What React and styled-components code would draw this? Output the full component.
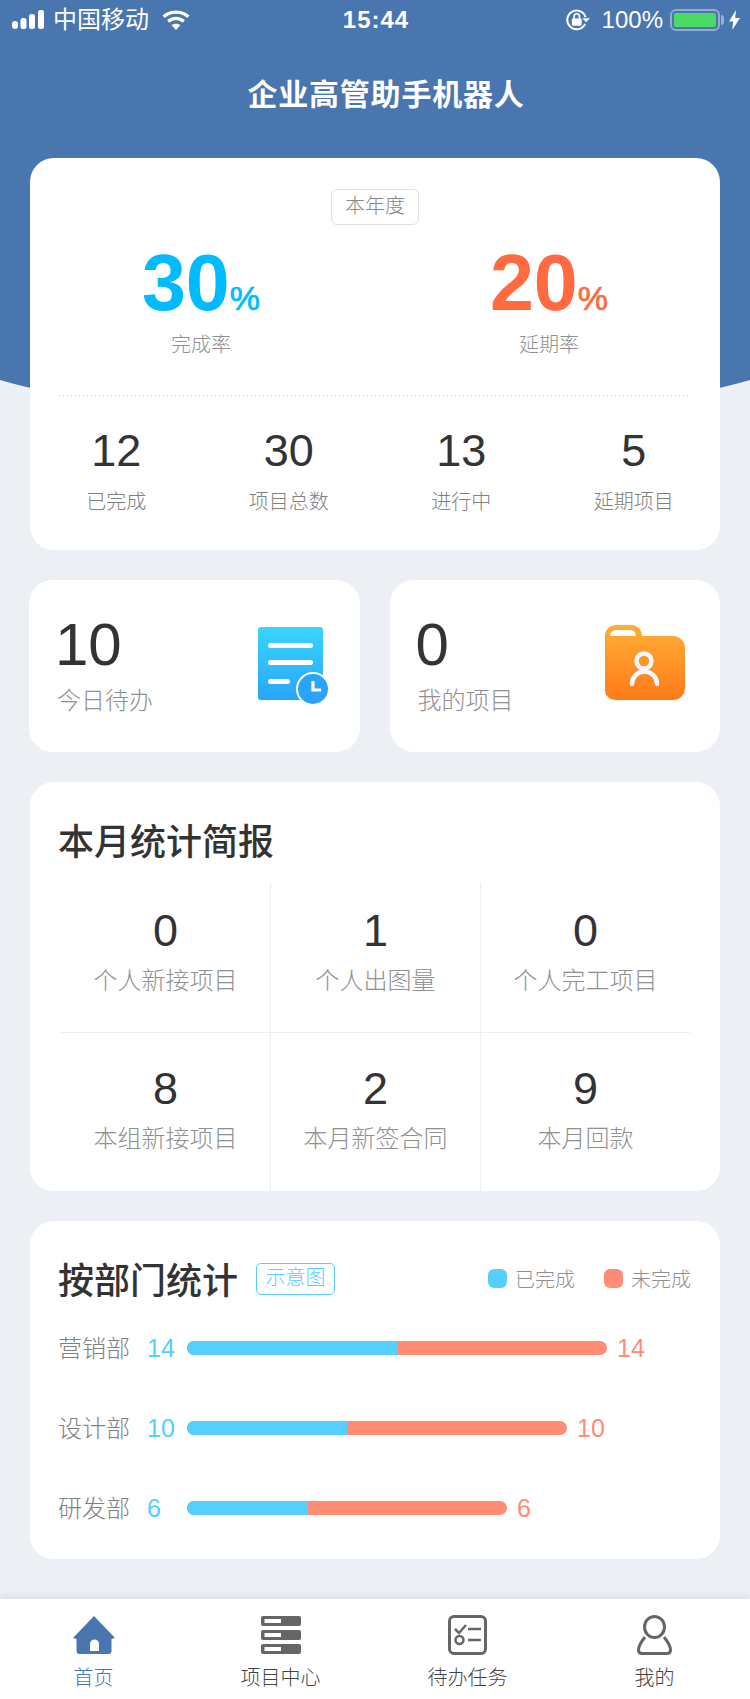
import React from 'react'
import styled, { createGlobalStyle } from 'styled-components'

const BLUE = '#4a76b0'
const SKY = '#55cfff'
const CORAL = '#ff8c74'

const GlobalStyle = createGlobalStyle`
    html, body {
        margin: 0;
        padding: 0;
        background: #ecf0f5;
    }
    * {
        box-sizing: border-box;
    }
    body {
        font-family: "Liberation Sans", "Noto Sans CJK SC", sans-serif;
    }
`

const Page = styled.div`
    width: 750px;
    min-height: 1699px;
    display: flex;
    flex-direction: column;
    overflow: hidden;
    background: #ecf0f5;
`

const Hero = styled.header`
    position: relative;
    height: 158px;
    color: #fff;

    /* wide ellipse so only the shallow part of the curve shows */
    &::before {
        content: "";
        position: absolute;
        top: 0;
        left: -125px;
        width: 1000px;
        height: 423px;
        background: ${BLUE};
        border-radius: 0 0 50% 50% / 0 0 127px 127px;
    }
`

const StatusBar = styled.div`
    position: relative;
    height: 40px;
    display: grid;
    grid-template-columns: 1fr auto 1fr;
    align-items: center;
    padding: 0 10px 0 12px;
    font-size: 24px;
`

const StatusLeft = styled.div`
    display: flex;
    align-items: center;
`

const StatusRight = styled.div`
    display: flex;
    align-items: center;
    justify-content: flex-end;
`

const Carrier = styled.span`
    margin: 0 13px 0 9px;
    font-size: 24px;
    line-height: 40px;
`

const Clock = styled.span`
    font-weight: 700;
    font-size: 24px;
    letter-spacing: 1px;
`

const Percent = styled.span`
    margin: 0 7px 0 11px;
    font-size: 24px;
`

const Battery = styled.div`
    position: relative;
    width: 50px;
    height: 22px;
    padding: 2px;
    border: 2px solid rgba(255, 255, 255, 0.4);
    border-radius: 6px;
    margin-right: 9px;

    &::before {
        content: "";
        display: block;
        height: 100%;
        border-radius: 2px;
        background: #4cd964;
    }

    &::after {
        content: "";
        position: absolute;
        right: -6px;
        top: 4px;
        width: 3px;
        height: 10px;
        border-radius: 0 3px 3px 0;
        background: rgba(255, 255, 255, 0.45);
    }
`

const Title = styled.h1`
    position: relative;
    margin: 31px 0 0;
    padding-left: 22px;
    text-align: center;
    font-size: 30px;
    line-height: 48px;
    font-weight: 700;
    letter-spacing: 0.8px;
`

const Content = styled.main`
    position: relative;
    flex: 1;
    display: flex;
    flex-direction: column;
    gap: 30px;
    padding: 0 30px;
`

const Card = styled.section`
    background: #fff;
    border-radius: 24px;
`

const SummaryCard = styled(Card)`
    padding: 31px 0 34px;
    display: flex;
    flex-direction: column;
    align-items: center;
`

const YearTag = styled.div`
    width: 88px;
    height: 36px;
    border: 1.5px solid #e0e0e0;
    border-radius: 6px;
    text-align: center;
    font-size: 20px;
    line-height: 32px;
    font-weight: 300;
    color: #888;
`

const RateRow = styled.div`
    width: 696px;
    margin-top: 19px;
    display: grid;
    grid-template-columns: 1fr 1fr;
`

const Rate = styled.div`
    display: flex;
    flex-direction: column;
    align-items: center;
    color: ${(p) => p.$color};
`

const RateValue = styled.div`
    font-size: 79px;
    line-height: 78px;
    font-weight: 700;
`

const RateUnit = styled.span`
    font-size: 34px;
    line-height: 1;
    font-weight: 400;
    -webkit-text-stroke: 0.7px currentColor;
`

const RateLabel = styled.div`
    margin-top: 9px;
    font-size: 20px;
    line-height: 28px;
    font-weight: 300;
    color: #909090;
`

const DottedRule = styled.div`
    width: 632px;
    height: 1px;
    margin-top: 36px;
    background: linear-gradient(to right, #c4c4c4 1px, transparent 1px) 0 0 / 4px 1px repeat-x;
`

const CountRow = styled.div`
    width: 100%;
    margin-top: 30px;
    display: grid;
    grid-template-columns: repeat(4, 1fr);
    text-align: center;
`

const CountValue = styled.div`
    font-size: 45px;
    line-height: 50px;
    color: #333;
`

const CountLabel = styled.div`
    margin-top: 12px;
    font-size: 20px;
    line-height: 28px;
    font-weight: 300;
    color: #808080;
`

const ShortcutRow = styled.div`
    margin-left: -1px;
    display: grid;
    grid-template-columns: 1fr 1fr;
    gap: 30px;
`

const Shortcut = styled(Card)`
    height: 172px;
    padding: 35px ${(p) => p.$right}px 0 28px;
    display: flex;
    justify-content: space-between;
    align-items: flex-start;
`

const ShortcutValue = styled.div`
    margin-left: -2px;
    font-size: 60px;
    line-height: 60px;
    color: #333;
`

const ShortcutLabel = styled.div`
    margin-top: 10px;
    font-size: 24px;
    line-height: 32px;
    font-weight: 300;
    color: #909090;
`

const ShortcutIcon = styled.svg`
    margin-top: ${(p) => p.$top}px;
    flex: none;
`

const SectionTitle = styled.h2`
    margin: 0;
    padding-top: 4px;
    font-size: 36px;
    line-height: 50px;
    font-weight: 500;
    color: #333;
`

const ReportCard = styled(Card)`
    padding: 32px 30px 0 28px;
`

const ReportGrid = styled.div`
    margin: 14px 0 0 3px;
    display: grid;
    grid-template-columns: 210px 210px 1fr;
    grid-template-rows: 151px 158px;
    text-align: center;
`

const ReportCell = styled.div`
    padding-top: 24px;
    border-right: 1px solid #eee;

    &:nth-child(3n) {
        border-right: 0;
    }

    &:nth-child(-n + 3) {
        border-bottom: 1px solid #eee;
    }

    &:nth-child(n + 4) {
        padding-top: 31px;
    }
`

const ReportValue = styled.div`
    font-size: 45px;
    line-height: 50px;
    color: #333;
`

const ReportLabel = styled.div`
    margin-top: 8px;
    font-size: 24px;
    line-height: 34px;
    font-weight: 300;
    color: #909090;
`

const DepartmentCard = styled(Card)`
    padding: 32px 30px 31px 28px;
`

const DepartmentHead = styled.div`
    display: flex;
    align-items: center;
`

const SketchTag = styled.span`
    width: 79px;
    height: 32px;
    margin: 0 0 2px 18px;
    border: 1px solid ${SKY};
    border-radius: 5px;
    text-align: center;
    font-size: 20px;
    line-height: 29px;
    font-weight: 300;
    color: ${SKY};
`

const Legend = styled.div`
    margin: 0 -1px 4px auto;
    display: flex;
    align-items: center;
    font-size: 20px;
    font-weight: 300;
    color: #909090;
`

const LegendDot = styled.i`
    width: 19px;
    height: 19px;
    margin: 0 8px 0 ${(p) => p.$gap}px;
    border-radius: 6px;
    background: ${(p) => p.$color};
`

const BarList = styled.div`
    margin-top: 21px;
    display: flex;
    flex-direction: column;
    gap: 40px;
`

const BarRow = styled.div`
    height: 40px;
    display: flex;
    align-items: center;
`

const BarName = styled.span`
    width: 89px;
    margin-bottom: 3px;
    font-size: 24px;
    font-weight: 300;
    color: #808080;
`

const BarCount = styled.span`
    width: 40px;
    font-size: 25px;
    color: ${SKY};
`

const Bar = styled.div`
    height: 14px;
    display: flex;
    overflow: hidden;
    border-radius: 7px;
    background: ${CORAL};
`

const BarDone = styled.div`
    height: 100%;
    background: ${SKY};
`

const BarRest = styled.span`
    margin-left: 10px;
    font-size: 25px;
    color: ${CORAL};
`

const TabBar = styled.nav`
    position: relative;
    height: 100px;
    padding-right: 2px;
    display: grid;
    grid-template-columns: repeat(4, 1fr);
    background: #fff;
    box-shadow: 0 -2px 8px rgba(120, 140, 180, 0.2);
`

const Tab = styled.div`
    padding-top: 16px;
    display: flex;
    flex-direction: column;
    align-items: center;
    color: ${(p) => (p.$active ? BLUE : '#444')};
`

const TabIconBox = styled.div`
    height: 40px;
    display: flex;
    align-items: center;
`

const TabLabel = styled.span`
    margin-top: 11px;
    font-size: 20px;
    line-height: 24px;
    font-weight: 300;
`

const SignalIcon = () => (
    <svg width="32" height="20" viewBox="0 0 32 20" fill="#fff">
        <rect x="0" y="11" width="6" height="8" rx="3" />
        <rect x="8.5" y="8" width="6" height="11" rx="2.5" />
        <rect x="17" y="4" width="6" height="15" rx="2.5" />
        <rect x="26" y="0" width="6" height="19" rx="2.5" />
    </svg>
)

const WifiIcon = () => (
    <svg width="28" height="20" viewBox="0 0 28 20" fill="none" stroke="#fff" strokeWidth="3.4">
        <path d="M1.6 6.8C8.6 .6 19.4 .6 26.4 6.8" />
        <path d="M6.2 11.4C10.8 7.4 17.2 7.4 21.8 11.4" />
        <path d="M14 20L9.6 15.2C12 13.2 16 13.2 18.4 15.2Z" fill="#fff" stroke="none" />
    </svg>
)

const RotationLockIcon = () => (
    <svg width="25" height="22" viewBox="0 0 23 20" fill="none">
        <path d="M17.6 13.5A8.6 8.6 0 1 1 18 7.5" stroke="#fff" strokeWidth="1.8" />
        <path d="M15 8.4h7l-3.5 3.6Z" fill="#fff" />
        <rect x="5.4" y="8.6" width="9" height="6.6" rx="1" fill="#fff" />
        <path d="M7.4 9V6.8a2.5 2.5 0 0 1 5 0V9" stroke="#fff" strokeWidth="1.5" />
    </svg>
)

const BoltIcon = () => (
    <svg width="11" height="20" viewBox="0 0 11 20" fill="#fff">
        <path d="M7 0L0 11.5h4.2L3.2 20 11 8H6.2Z" />
    </svg>
)

const TodoIcon = () => (
    <ShortcutIcon $top={12} width="72" height="79" viewBox="0 0 72 79">
        <defs>
            <linearGradient id="todoFill" x1="0" y1="0" x2="0" y2="1">
                <stop offset="0" stopColor="#38d6fb" />
                <stop offset="1" stopColor="#2aa4fb" />
            </linearGradient>
        </defs>
        <rect x="0" y="0" width="65" height="73" rx="3" fill="url(#todoFill)" />
        <rect x="10" y="16" width="45" height="5" rx="2.5" fill="#fff" />
        <rect x="10" y="33" width="45" height="5" rx="2.5" fill="#fff" />
        <rect x="10" y="52" width="22" height="5" rx="2.5" fill="#fff" />
        <circle cx="55" cy="62" r="17" fill="#fff" />
        <circle cx="55" cy="62" r="15" fill="#2aa4fb" />
        <path d="M55 54v9h8" fill="none" stroke="#fff" strokeWidth="3.2" />
    </ShortcutIcon>
)

const ProjectIcon = () => (
    <ShortcutIcon $top={10} width="80" height="75" viewBox="0 0 80 75">
        <defs>
            <linearGradient id="folderFill" x1="0" y1="0" x2="0" y2="1">
                <stop offset="0" stopColor="#ffae35" />
                <stop offset="1" stopColor="#ff7a1a" />
            </linearGradient>
        </defs>
        <path
            d="M0 11A11 11 0 0 1 11 0H26A11 11 0 0 1 37 11H68A12 12 0 0 1 80 23V63A12 12 0 0 1 68 75H10A10 10 0 0 1 0 65Z"
            fill="url(#folderFill)"
        />
        <path d="M5 11A6 6 0 0 1 11 5H25A6 6 0 0 1 31 11Z" fill="#fff" />
        <circle cx="39" cy="36" r="7.5" fill="none" stroke="#f2f8fd" strokeWidth="4.5" />
        <path d="M27 59A12.500 12.500 0 0 1 52 59" fill="none" stroke="#f2f8fd" strokeWidth="4.5" strokeLinecap="round" />
    </ShortcutIcon>
)

const HomeIcon = () => (
    <svg width="42" height="38" viewBox="0 0 42 38" fill={BLUE}>
        <path d="M21 0L42 22 38.500 23V35A3 3 0 0 1 35.500 38H6.500A3 3 0 0 1 3.500 35V23L0 22Z" />
        <path d="M17 35V28A4.500 4.500 0 0 1 26 28V35Z" fill="#fff" />
    </svg>
)

const ServerIcon = () => (
    <svg width="40" height="38" viewBox="0 0 40 38">
        {[0, 14, 28].map((y) => (
            <g key={y}>
                <rect x="0" y={y} width="40" height="10" rx="2" fill="#666" />
                <rect x="3.500" y={y + 3} width="16.500" height="4" fill="#fff" />
            </g>
        ))}
    </svg>
)

const TaskIcon = () => (
    <svg width="39" height="40" viewBox="0 0 39 40" fill="none" stroke="#666" strokeWidth="3">
        <rect x="1.500" y="1.500" width="36" height="37" rx="4.500" />
        <path d="M7 14l4 4 7-8" strokeWidth="2.500" />
        <path d="M20 14h13M20 25h13" strokeWidth="2.500" />
        <circle cx="11.500" cy="25" r="4" strokeWidth="2.500" />
    </svg>
)

const MineIcon = () => (
    <svg width="35" height="40" viewBox="0 0 35 40" fill="none" stroke="#666" strokeWidth="3">
        <ellipse cx="17.500" cy="12" rx="10" ry="10.500" />
        <path d="M8 22C4 27 1.500 31 1.500 35Q1.500 38.500 5 38.500H30Q33.500 38.500 33.500 35C33.500 31 31 27 27 22" />
    </svg>
)

const counts = [
    { value: 12, label: '已完成' },
    { value: 30, label: '项目总数' },
    { value: 13, label: '进行中' },
    { value: 5, label: '延期项目' },
]

const report = [
    { value: 0, label: '个人新接项目' },
    { value: 1, label: '个人出图量' },
    { value: 0, label: '个人完工项目' },
    { value: 8, label: '本组新接项目' },
    { value: 2, label: '本月新签合同' },
    { value: 9, label: '本月回款' },
]

const departments = [
    { name: '营销部', done: 14, rest: 14, width: 420, doneWidth: 210 },
    { name: '设计部', done: 10, rest: 10, width: 380, doneWidth: 160 },
    { name: '研发部', done: 6, rest: 6, width: 320, doneWidth: 121 },
]

const tabs = [
    { label: '首页', icon: <HomeIcon />, active: true },
    { label: '项目中心', icon: <ServerIcon /> },
    { label: '待办任务', icon: <TaskIcon /> },
    { label: '我的', icon: <MineIcon /> },
]

const App = () => {
    return (
        <Page>
            <GlobalStyle />
            <Hero>
                <StatusBar>
                    <StatusLeft>
                        <SignalIcon />
                        <Carrier>中国移动</Carrier>
                        <WifiIcon />
                    </StatusLeft>
                    <Clock>15:44</Clock>
                    <StatusRight>
                        <RotationLockIcon />
                        <Percent>100%</Percent>
                        <Battery />
                        <BoltIcon />
                    </StatusRight>
                </StatusBar>
                <Title>企业高管助手机器人</Title>
            </Hero>
            <Content>
                <SummaryCard>
                    <YearTag>本年度</YearTag>
                    <RateRow>
                        <Rate $color="#00bbff">
                            <RateValue>30<RateUnit>%</RateUnit></RateValue>
                            <RateLabel>完成率</RateLabel>
                        </Rate>
                        <Rate $color="#ff6a41">
                            <RateValue>20<RateUnit>%</RateUnit></RateValue>
                            <RateLabel>延期率</RateLabel>
                        </Rate>
                    </RateRow>
                    <DottedRule />
                    <CountRow>
                        {counts.map((item) => (
                            <div key={item.label}>
                                <CountValue>{item.value}</CountValue>
                                <CountLabel>{item.label}</CountLabel>
                            </div>
                        ))}
                    </CountRow>
                </SummaryCard>

                <ShortcutRow>
                    <Shortcut $right={30}>
                        <div>
                            <ShortcutValue>10</ShortcutValue>
                            <ShortcutLabel>今日待办</ShortcutLabel>
                        </div>
                        <TodoIcon />
                    </Shortcut>
                    <Shortcut $right={35}>
                        <div>
                            <ShortcutValue>0</ShortcutValue>
                            <ShortcutLabel>我的项目</ShortcutLabel>
                        </div>
                        <ProjectIcon />
                    </Shortcut>
                </ShortcutRow>

                <ReportCard>
                    <SectionTitle>本月统计简报</SectionTitle>
                    <ReportGrid>
                        {report.map((item) => (
                            <ReportCell key={item.label}>
                                <ReportValue>{item.value}</ReportValue>
                                <ReportLabel>{item.label}</ReportLabel>
                            </ReportCell>
                        ))}
                    </ReportGrid>
                </ReportCard>

                <DepartmentCard>
                    <DepartmentHead>
                        <SectionTitle>按部门统计</SectionTitle>
                        <SketchTag>示意图</SketchTag>
                        <Legend>
                            <LegendDot $color={SKY} $gap={0} />
                            已完成
                            <LegendDot $color={CORAL} $gap={29} />
                            未完成
                        </Legend>
                    </DepartmentHead>
                    <BarList>
                        {departments.map((dept) => (
                            <BarRow key={dept.name}>
                                <BarName>{dept.name}</BarName>
                                <BarCount>{dept.done}</BarCount>
                                <Bar style={{ width: dept.width }}>
                                    <BarDone style={{ width: dept.doneWidth }} />
                                </Bar>
                                <BarRest>{dept.rest}</BarRest>
                            </BarRow>
                        ))}
                    </BarList>
                </DepartmentCard>
            </Content>
            <TabBar>
                {tabs.map((tab) => (
                    <Tab key={tab.label} $active={tab.active}>
                        <TabIconBox>{tab.icon}</TabIconBox>
                        <TabLabel>{tab.label}</TabLabel>
                    </Tab>
                ))}
            </TabBar>
        </Page>
    )
}

export default App
